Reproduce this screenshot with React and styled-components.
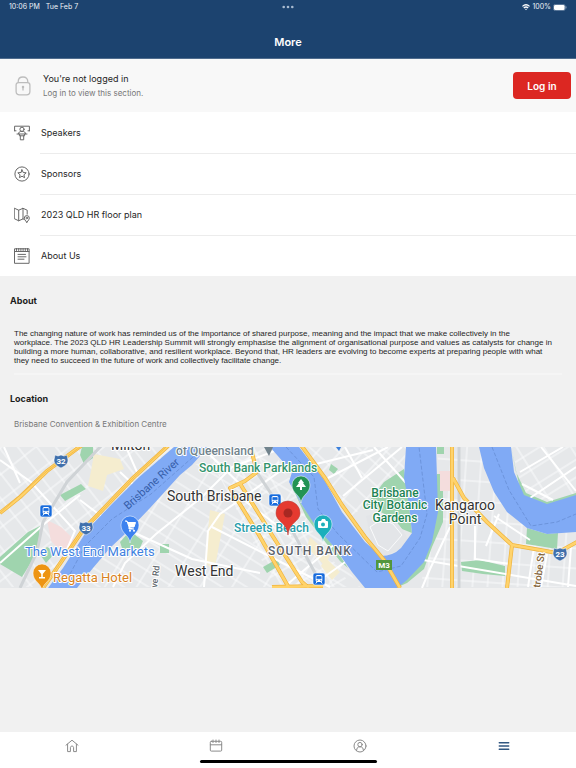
import React from "react";
import styled, { createGlobalStyle } from "styled-components";

const GlobalStyle = createGlobalStyle`
  * { box-sizing: border-box; }
  body {
    margin: 0;
    background: #f1f1f1;
    color: #252525;
    font-family: Inter, "Liberation Sans", sans-serif;
  }
`;

const Screen = styled.div`
  display: flex;
  flex-direction: column;
  min-height: 100vh;
`;

const Header = styled.header`
  background: #1c436f;
  color: #fff;
  height: 59px;
  border-bottom: 1px solid #4f6c8d;
`;

const StatusBar = styled.div`
  display: grid;
  grid-template-columns: 1fr auto 1fr;
  align-items: center;
  height: 14px;
  padding: 0 9px;
  font-size: 7px;
  line-height: 10px;
  color: #eef2f7;
`;

const StatusGroup = styled.div`
  display: flex;
  align-items: center;
  gap: ${(p) => p.$gap}px;
  justify-content: ${(p) => (p.$end ? "flex-end" : "flex-start")};
`;

const Title = styled.h1`
  margin: 0;
  padding-top: 20px;
  text-align: center;
  font-size: 11px;
  line-height: 16px;
  font-weight: 600;
`;

const Main = styled.main`
  flex: 1;
`;

const LoginRow = styled.section`
  display: flex;
  align-items: center;
  height: 53px;
  padding: 0 5px 0 15px;
  background: #f8f8f8;
`;

const LoginText = styled.div`
  flex: 1;
  padding-left: 12px;
`;

const LoginTitle = styled.p`
  margin: 0;
  font-size: 9px;
  line-height: 14px;
`;

const LoginHint = styled.p`
  margin: 0;
  font-size: 8px;
  line-height: 14px;
  color: #777;
`;

const LoginButton = styled.button`
  width: 58px;
  height: 27px;
  padding: 0;
  border: 0;
  border-radius: 4px;
  background: #dc2722;
  color: #fff;
  font: 600 10px/14px Inter, "Liberation Sans", sans-serif;
`;

const Menu = styled.nav`
  background: #fff;
`;

const MenuLink = styled.a`
  display: flex;
  align-items: center;
  height: 41px;
  padding-left: 14px;
  gap: 10px;
  color: inherit;
  text-decoration: none;
  font-size: 9px;
  line-height: 14px;
`;

const MenuLabel = styled.span`
  display: flex;
  align-items: center;
  flex: 1;
  height: 41px;
  padding-left: 1px;
  border-top: 1px solid ${(p) => (p.$first ? "transparent" : "#ececec")};
`;

const SectionTitle = styled.h2`
  margin: 0;
  padding: ${(p) => p.$top}px 10px 0;
  font-size: 9px;
  line-height: 14px;
  font-weight: 700;
  color: #1c1c1c;
`;

const Description = styled.p`
  margin: 21px 14px 0;
  padding-bottom: 8px;
  border-bottom: 2px solid #f5f5f5;
  font-family: "Liberation Sans", sans-serif;
  font-size: 8px;
  line-height: 9px;
`;

const Venue = styled.p`
  margin: 0;
  padding: 11px 14px 16px;
  font-size: 8px;
  line-height: 14px;
  color: #777;
`;

const MapSvg = styled.svg`
  display: block;
  width: 100%;
  height: 141px;
  background: #e6e8ea;
  font-family: Roboto, sans-serif;
`;

const TabBar = styled.footer`
  display: flex;
  flex-direction: column;
  align-items: center;
  height: 36px;
  background: #fff;
`;

const Tabs = styled.nav`
  display: grid;
  grid-template-columns: repeat(4, 1fr);
  width: 100%;
  height: 28px;
`;

const Tab = styled.a`
  display: flex;
  align-items: center;
  justify-content: center;
  color: ${(p) => (p.$active ? "#305680" : "#8b8b8b")};
`;

const HomeIndicator = styled.div`
  width: 177px;
  height: 3px;
  border-radius: 2px;
  background: #000;
`;

const Icon = ({ size = 16, box = 16, width = 1, children }) => (
  <svg width={size} height={size} viewBox={`0 0 ${box} ${box}`} fill="none" stroke="currentColor" strokeWidth={width} strokeLinejoin="round" strokeLinecap="round" aria-hidden="true">
    {children}
  </svg>
);

const MenuIconBox = styled.span`
  display: flex;
  color: #686868;
`;

const LockBox = styled.span`
  display: flex;
  color: #bdbdbd;
`;

const menu = [
  {
    label: "Speakers",
    icon: <><path d="M.6 5.8V1.2h14.8v4.6M.6 5.8h1.4M14 5.8h1.4" /><circle cx="8" cy="4.3" r="2.1" /><path d="M4.5 8.8c0-1.6 1-2.4 3.5-2.4s3.5.8 3.5 2.4M3 9h10M5.4 9.2v1.6h5.2V9.2M6.3 10.8v4h3.4v-4" /></>,
  },
  {
    label: "Sponsors",
    icon: <><circle cx="8" cy="8" r="7.1" /><path d="m8 3.8 1.2 2.7 3 .3-2.3 2 .7 2.9L8 10.2l-2.6 1.5.7-2.9-2.3-2 3-.3z" /></>,
  },
  {
    label: "2023 QLD HR floor plan",
    icon: <><path d="M.6 1.3 4.7 3.2v10.6L.6 11.8zM4.7 3.2 9 1.3v10.6l-4.3 1.9M9 1.3l4.2 1.9v4M9 11.9l1.2.5M12.8 15.3c-1.8-2.2-2.5-3-2.5-4.2a2.5 2.5 0 0 1 5 0c0 1.2-.7 2-2.5 4.2z" /><circle cx="12.8" cy="11" r=".8" /></>,
  },
  {
    label: "About Us",
    icon: <><path d="M.9.8h14.2v14.5H.9zM.9 3.5h14.2M2.5.5v2M4.7.5v2M6.9.5v2M9.1.5v2M11.3.5v2M13.5.5v2M4 6.4h7.5M4 8.8h8M4 11.2h6" /></>,
  },
];

const tabs = [
  { label: "Home", icon: <Icon size={14} box={14}><path d="M1 6.2 7 1.2l6 5M2.6 5.2v7.4h2.8V8.7c0-1 .6-1.6 1.6-1.6s1.6.6 1.6 1.6v3.9h2.8V5.2" /></Icon> },
  { label: "Schedule", icon: <Icon size={14} box={14}><rect x="1.3" y="2.3" width="11.4" height="9.8" rx="1" /><path d="M1.3 5.8h11.4M4 1v2.5M7 1v2.5M10 1v2.5" /></Icon> },
  { label: "Profile", icon: <Icon size={14} box={14}><circle cx="7" cy="7" r="6" /><circle cx="7" cy="5.6" r="2.2" /><path d="M3.6 11.5c.2-2.7 1-3.7 3.4-3.7s3.2 1 3.4 3.7" /></Icon> },
  { label: "More", active: true, icon: <Icon size={14} box={14} width={1.5}><path d="M2.3 3.7h9.4M2.3 7h9.4M2.3 10.3h9.4" /></Icon> },
];

const grids = [
  { id: "milton", w: 21, h: 15, a: 52, area: "0,0 182,0 130,45 80,90 45,140 0,140" },
  { id: "westend", w: 27, h: 13, a: 32, area: "192,18 272,0 300,55 360,140 77,140 110,101" },
  { id: "southbank", w: 19, h: 22, a: 60, area: "204,0 270,0 292,35 310,80 352,140 275,140 230,50" },
  { id: "city", w: 17, h: 16, a: 42, area: "301,0 406,0 404,31 350,70" },
  { id: "point", w: 15, h: 20, a: 4, area: "438,0 480,0 484,21 507,65 547,87 576,85 576,140 420,140 437,70" },
  { id: "east", w: 23, h: 15, a: -32, area: "511,0 576,0 576,48 547,57 524,48" },
];

const rivers = [
  "M208 0 192 18 180 28 150 61 127 85 110 101 93 121 77 141H48L63 121 88 82 112 57 138 31 174 0Z",
  "M270 0H299L325 34 342 65 365 95 381 109Q393 109 401 101L412 86 409 58 404 31 406 0H436L437 31 438 65 432 95 424 115 407 133 397 141H365L352 125 335 101 315 78 302 58 289 35 292 25Z",
  "M479 0 484 21 494 45 507 65 527 81 547 87 576 85V48L547 57 524 48 514 25 511 0Z",
];

const arterials = [
  "M0 66 20 50 47 24 82-2",
  "M43 141 57 121 83 83 110 55 133 31 169-2",
  "M250-2 257 25 245 34 230 41 235 49 259 88 289 141M239 35 272 88 302 135 309 141M272 140 323 139",
  "M301-2 325 31 342 58 365 90 384 113 400 141",
  "M452-2V141M453 31 464 51 487 75 512 98 557 106 577 95M512 98 507 141",
];

const minors = [
  "M80 53 105 72 148 92 192 112 260 126",
  "M0 13 31 35 75 84 58 123M0 116 43 78 80 48M120 25 135 39M126 0 137 25M20 36 4 0",
  "M113 140 125 116 156 87 202 50 232 20 285 0",
  "M204 140 208 84 220 67 300 10M212 80 330 140M232 44 291 89",
  "M210 8 245 42M283 141 336 96M310 140 348 113M345 0 362 31M304 20 373 3M328 31 388 0M343 49 402 0M374 0 406 36",
  "M422 141 430 122 450 80 M423 113 576 139M475 79V112L510 117M486 99 499 67M534 100 528 140M547 107 541 140M571 100 568 140M494 69 530 93",
  "M530 51 576 20M520 25 563 0M541 0 576 44M522 37 553 53",
];

const Pin = ({ x, y, color, children }) => (
  <g transform={`translate(${x} ${y})`}>
    <path d="M0 14C-1 5-9 5-9-4A9 9 0 0 1 9-4C9 5 1 5 0 14Z" fill={color} stroke="#fff" strokeWidth=".5" />
    {children}
  </g>
);

const Train = ({ x, y }) => (
  <g transform={`translate(${x} ${y})`}>
    <rect x="-6" y="-6" width="12" height="12" rx="2" fill="#176bdc" stroke="#fff" strokeWidth=".6" />
    <rect x="-3.3" y="-4" width="6.6" height="7" rx="1.5" fill="#fff" />
    <path d="M-2.2-2.5h4.4v2.3h-4.4zM-2.4 1.5h1.3M1.1 1.5h1.3" fill="#176bdc" stroke="#176bdc" strokeWidth=".7" />
    <path d="m-2 3-1.2 1.5M2 3l1.2 1.5" stroke="#fff" />
  </g>
);

const Shield = ({ x, y, children }) => (
  <g transform={`translate(${x} ${y})`}>
    <path d="m-6-6 3 1 3-1 3 1 3-1 1 5c0 4-3 6-7 8-4-2-7-4-7-8z" fill="#4070ac" stroke="#fff" strokeWidth=".5" />
    <text y="3" fontSize="8" fontWeight="700" fill="#fff" textAnchor="middle">{children}</text>
  </g>
);

const MapText = ({ x, y, size = 12, color = "#333", anchor = "start", weight = 500, children, ...rest }) => (
  <text x={x} y={y} fontSize={size} fill={color} textAnchor={anchor} fontWeight={weight} stroke="#fff" strokeWidth="2" strokeLinejoin="round" paintOrder="stroke" {...rest}>
    {children}
  </text>
);

const VenueMap = () => (
  <MapSvg viewBox="0 0 576 141" preserveAspectRatio="xMidYMid slice" role="img" aria-label="Map of Brisbane Convention & Exhibition Centre">
    <defs>
      {grids.map((g) => (
        <pattern key={g.id} id={g.id} width={g.w} height={g.h} patternUnits="userSpaceOnUse" patternTransform={`rotate(${g.a})`}>
          <path d={`M0 1H${g.w}M1 0V${g.h}`} stroke="#fafbfc" strokeWidth="1" />
        </pattern>
      ))}
    </defs>
    {grids.map((g) => <polygon key={g.id} points={g.area} fill={`url(#${g.id})`} />)}
    <path d="M94 7 120 12 124 22 107 28 103 44 88 39 91 24ZM210 63 225 67 214 125 205 115ZM310 90 330 108 325 119 307 100ZM326 111 340 125 332 133 321 119Z" fill="#f5edcf" />
    <path d="M47 73 61 80 78 96 63 107 51 94Z M439 24H451V44H439Z" fill="#f4dddd" />
    <path d="M82 0H93V11L84 17 80 8ZM60 48 81 37 86 42 65 54ZM0 110 28 85 40 79 38 104 22 130 0 117ZM47 100 56 105 46 116 39 106ZM120 95 130 84 143 94 139 103 123 104ZM160 97H169V106H160ZM263 120 277 112 280 118 267 126ZM288 31 300 55 316 78 335 101 348 121 340 114 306 70ZM404 22 409 58 412 86 402 82 391 70 366 58 384 35ZM437 0H444V7H437ZM437 27H440V44H443V75L432 100 424 122 407 136 398 140ZM527 81 547 87 558 86 557 102 526 97ZM461 115 480 113 505 119V129L483 127 462 124ZM511 0 516 25 526 46 547 55 576 46V50L547 60 522 52ZM331 17 338 22 334 27 329 23Z" fill="#9fd4ae" />
    <path d="M366 69Q388 60 402 82L409 94 401 102 384 109 372 98Z" fill="#e3e5e8" />
    <path d="M370 80Q382 70 393 77L402 88 388 104 378 98Z" fill="none" stroke="#fafbfc" />
    {minors.map((d) => <path key={d} d={d} fill="none" stroke="#fff" strokeWidth="2" />)}
    <path d="M20 141 37 105 43 75 67 35 102-2M252 18 278 57 322 139M459 0V141" fill="none" stroke="#cfd3d6" strokeWidth="3" />
    {rivers.map((d) => <path key={d} d={d} fill="#80aaf5" />)}
    <path d="M70 127 85 99 112 72 151 47 193 10M286 0 314 30 318 62 338 87 377 125 401 119 420 91 427 67 419 0M492 0 509 43 531 79 557 75 576 67" fill="none" stroke="#6389d0" strokeWidth=".7" strokeDasharray="4 2" />
    {arterials.map((d) => <g key={d} fill="none" strokeLinejoin="round"><path d={d} stroke="#efb33d" strokeWidth="4" /><path d={d} stroke="#ffd36b" strokeWidth="2.6" /></g>)}
    <path d="M0 66 47 24 80 0M43 141 83 83 133 31 166 0" fill="none" stroke="#efb33d" strokeWidth=".7" />

    <MapText x="111" y="3" size={14} weight={400}>Milton</MapText>
    <MapText x="176" y="8" color="#71838d">of Queensland</MapText>
    <path d="M264 0H273L269 9Z" fill="#71838d" />
    <path d="M336 0h5l-2 4z" fill="#3b80dc" />
    <text x="128" y="63" transform="rotate(-42 128 63)" fontSize="11" fill="#365eaa">Brisbane River</text>
    <MapText x="199" y="25" color="#32936b">South Bank Parklands</MapText>
    <MapText x="167" y="54" size={14} weight={400}>South Brisbane</MapText>
    <MapText x="234" y="85" color="#289daa">Streets Beach</MapText>
    <MapText x="268" y="108" color="#59616a" letterSpacing="1">SOUTH BANK</MapText>
    <MapText x="175" y="129" size={14} weight={400}>West End</MapText>
    <MapText x="25" y="109" size={13} weight={400} color="#3e82df">The West End Markets</MapText>
    <MapText x="53" y="135" size={13} weight={400} color="#d98222">Regatta Hotel</MapText>
    <MapText x="395" y="50" color="#218354" anchor="middle">Brisbane</MapText>
    <MapText x="395" y="62" color="#218354" anchor="middle">City Botanic</MapText>
    <MapText x="395" y="75" color="#218354" anchor="middle">Gardens</MapText>
    <MapText x="465" y="63" size={14} weight={400} anchor="middle">Kangaroo</MapText>
    <MapText x="465" y="77" size={14} weight={400} anchor="middle">Point</MapText>
    <MapText x="157" y="141" size={9} color="#626970" transform="rotate(-83 157 141)">ve Rd</MapText>
    <MapText x="540" y="141" size={10} color="#85663c" transform="rotate(-82 540 141)">trobe St</MapText>
    <Shield x={61} y={14}>32</Shield><Shield x={86} y={81}>33</Shield><Shield x={560} y={107}>23</Shield>
    <rect x="376" y="113" width="16" height="10" fill="#52963d" />
    <text x="384" y="121" fontSize="8" fill="#fff" fontWeight="700" textAnchor="middle">M3</text>
    <Train x={46} y={64} /><Train x={275} y={53} /><Train x={319} y={132} />
    <Pin x={130} y={82} color="#3d82ef"><path d="M-5-8h2l2 6h5l1.5-4.5H-2M-1-2v2h5" fill="#fff" stroke="#fff" /><circle cx="0" cy="1.8" r="1" fill="#fff" /><circle cx="4" cy="1.8" r="1" fill="#fff" /></Pin>
    <Pin x={42} y={130} color="#ed9413"><path d="M-4-7h8l-3.2 4v3H3v1.5h-6V0h2.2v-3z" fill="#fff" /></Pin>
    <Pin x={301} y={42} color="#249354"><path d="m0-10 3 4H2l3 4H1v3h-2v-3h-4l3-4h-1z" fill="#fff" /></Pin>
    <Pin x={323} y={81} color="#1cafbb"><rect x="-5" y="-7" width="10" height="7" rx="1" fill="#fff" /><path d="m-2-7 1-2h3l1 2" fill="#fff" /><circle cx="0" cy="-3.5" r="2" fill="#1cafbb" /></Pin>
    <path d="M288 88C287 75 276 75 276 66A12 12 0 0 1 300 66C300 75 289 75 288 88Z" fill="#e53a30" stroke="#bb4039" strokeWidth=".6" />
    <circle cx="288" cy="66" r="4.5" fill="#a82822" />
  </MapSvg>
);

export default function App() {
  return (
    <>
      <GlobalStyle />
      <Screen>
        <Header>
          <StatusBar>
            <StatusGroup $gap={6}><span>10:06 PM</span><span>Tue Feb 7</span></StatusGroup>
            <svg width="12" height="4" fill="#a9bbd0" aria-hidden="true"><circle cx="1.7" cy="2" r="1.3" /><circle cx="6" cy="2" r="1.3" /><circle cx="10.3" cy="2" r="1.3" /></svg>
            <StatusGroup $gap={2} $end>
              <svg width="8" height="7" viewBox="0 0 8 7" fill="none" stroke="#fff" strokeWidth="1.3" aria-hidden="true"><path d="M.4 2.4Q4-1 7.6 2.4M1.8 4Q4 2 6.2 4" /><path d="m3 5 1 1.2L5 5Q4 4.4 3 5Z" fill="#fff" stroke="none" /></svg>
              <span>100%</span>
              <svg width="14" height="7" viewBox="0 0 14 7" aria-hidden="true"><rect x=".4" y=".4" width="11.8" height="6.2" rx="2" fill="none" stroke="#8ea4bd" strokeWidth=".6" /><rect x="1" y="1" width="10.6" height="5" rx="1.3" fill="#fff" /><path d="M13 2.4v2" stroke="#8ea4bd" /></svg>
            </StatusGroup>
          </StatusBar>
          <Title>More</Title>
        </Header>
        <Main>
          <LoginRow>
            <LockBox>
              <svg width="16" height="20" viewBox="0 0 16 20" fill="none" stroke="currentColor" strokeWidth="1.3" aria-hidden="true"><path d="M3.2 7V5.8C3.2 2.8 5 1 8 1s4.8 1.8 4.8 4.8V7M3.5 6.6h9c1.5 0 2.4 1 2.4 2.4v6.5c0 2-1.3 3.4-3.4 3.4h-7c-2 0-3.4-1.3-3.4-3.4V9c0-1.5.9-2.4 2.4-2.4zM8 10.5v4" /><circle cx="8" cy="11" r=".6" /></svg>
            </LockBox>
            <LoginText>
              <LoginTitle>You're not logged in</LoginTitle>
              <LoginHint>Log in to view this section.</LoginHint>
            </LoginText>
            <LoginButton type="button">Log in</LoginButton>
          </LoginRow>
          <Menu aria-label="More">
            {menu.map((item, i) => (
              <MenuLink key={item.label} href="#">
                <MenuIconBox><Icon>{item.icon}</Icon></MenuIconBox>
                <MenuLabel $first={i === 0}>{item.label}</MenuLabel>
              </MenuLink>
            ))}
          </Menu>
          <SectionTitle $top={18}>About</SectionTitle>
          <Description>
            The changing nature of work has reminded us of the importance of shared purpose, meaning and the impact that we make collectively in the
            <br />
            workplace. The 2023 QLD HR Leadership Summit will strongly emphasise the alignment of organisational purpose and values as catalysts for change in
            <br />
            building a more human, collaborative, and resilient workplace. Beyond that, HR leaders are evolving to become experts at preparing people with what
            <br />
            they need to succeed in the future of work and collectively facilitate change.
          </Description>
          <SectionTitle $top={17}>Location</SectionTitle>
          <Venue>Brisbane Convention &amp; Exhibition Centre</Venue>
          <VenueMap />
        </Main>
        <TabBar>
          <Tabs aria-label="Main">
            {tabs.map((tab) => (
              <Tab key={tab.label} href="#" aria-label={tab.label} $active={tab.active}>{tab.icon}</Tab>
            ))}
          </Tabs>
          <HomeIndicator />
        </TabBar>
      </Screen>
    </>
  );
}
